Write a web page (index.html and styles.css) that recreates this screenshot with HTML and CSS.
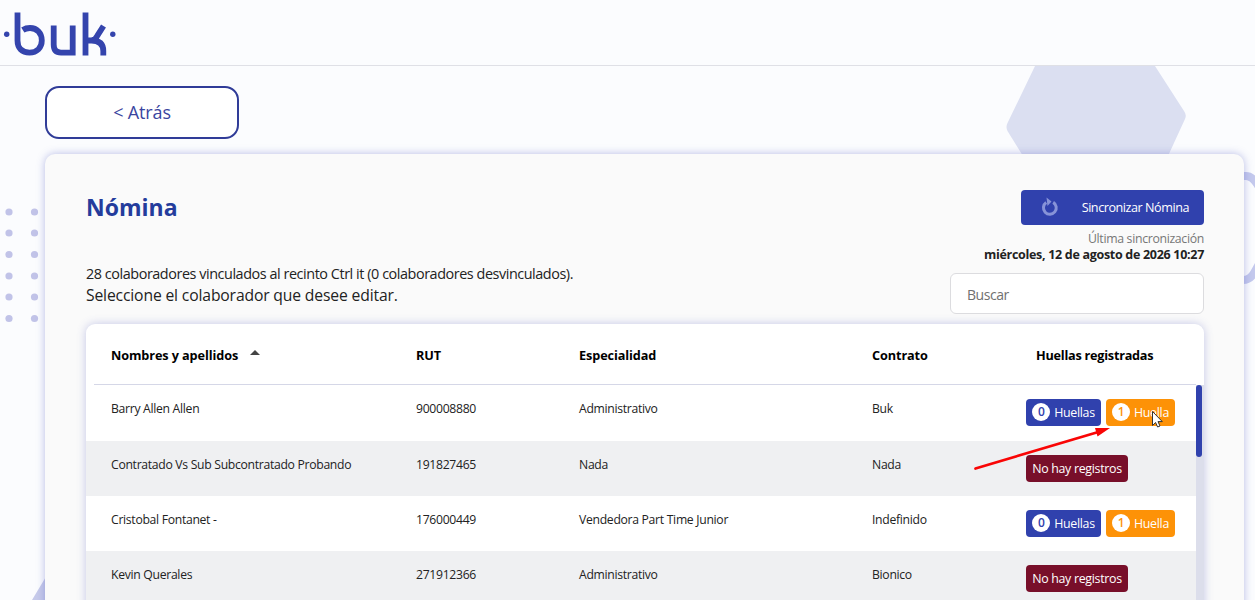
FILE: index.html
```html
<!DOCTYPE html>
<html lang="es">
<head>
<meta charset="utf-8">
<title>Nómina</title>
<link rel="stylesheet" href="styles.css">
</head>
<body>
<div class="page">
  <svg class="backdrop" width="1255" height="600" viewBox="0 0 1255 600">
    <path d="M1035 66H1155L1184 111Q1187 115 1185 119L1168 156H1023L1007.500 131Q1005.500 127 1007.500 123Z" fill="#dbdff1"/>
    <g fill="#c1c3e8">
      <circle cx="9" cy="212" r="3.6"/><circle cx="34.5" cy="212" r="3.6"/>
      <circle cx="9" cy="233" r="3.6"/><circle cx="34.5" cy="233" r="3.6"/>
      <circle cx="9" cy="254.500" r="3.6"/><circle cx="34.5" cy="254.500" r="3.6"/>
      <circle cx="9" cy="276" r="3.6"/><circle cx="34.5" cy="276" r="3.6"/>
      <circle cx="9" cy="297" r="3.6"/><circle cx="34.5" cy="297" r="3.6"/>
      <circle cx="9" cy="318.500" r="3.6"/><circle cx="34.5" cy="318.500" r="3.6"/>
    </g>
    <path d="M32 600L50 570V600Z" fill="#c6caea"/>
    <path d="M1235 176H1246Q1252 176 1257 184L1267 200V250L1254 273Q1250 280 1243 280" fill="none" stroke="#c4c9ed" stroke-width="8"/>
  </svg>
  <header class="topbar">
    <svg class="logo" width="120" height="60" viewBox="0 0 120 60" role="img" aria-label="buk">
      <g fill="none" stroke="#3444ad" stroke-width="5.800">
        <path d="M17.500 12.500V40.500C17.500 48 22 52.600 29.500 52.600C37 52.600 41.800 47.500 41.800 40.500C41.800 33 37 28 30 28C26.800 28 24.800 28.700 22.800 30"/>
        <path d="M53.700 25.500V44.500Q53.700 52.600 61 52.600H72.700V25.500"/>
        <path d="M85.500 12.500V55.500M87 40.500H91.500Q103.300 40.500 103.300 51V55.500M92 40.500Q95.500 39.500 97.500 35.500L103.500 26"/>
      </g>
      <circle cx="6.700" cy="34.300" r="2.700" fill="#3444ad"/><circle cx="112.800" cy="34.300" r="2.700" fill="#3444ad"/>
    </svg>
  </header>
  <main class="main">
    <button class="back"><span>&lt; Atrás</span></button>
    <section class="card">
      <div class="intro">
        <div class="intro-text">
          <h1 class="title">Nómina</h1>
          <p class="summary">28 colaboradores vinculados al recinto Ctrl it (0 colaboradores desvinculados).</p>
          <p class="hint">Seleccione el colaborador que desee editar.</p>
        </div>
        <div class="tools">
          <button class="sync">
            <svg class="sync-icon" width="18" height="20" viewBox="0 0 18 20"><path d="M12.200 5.400A6.400 6.400 0 1 1 5.200 5.600" fill="none" stroke="#8793d8" stroke-width="3"/><path d="M5.500 .5L10.500 4.500L6.500 9Z" fill="#8793d8"/></svg>
            <span>Sincronizar Nómina</span>
          </button>
          <span class="sync-label">Última sincronización</span>
          <strong class="sync-date">miércoles, 12 de agosto de 2026 10:27</strong>
          <input class="search" type="text" placeholder="Buscar">
        </div>
      </div>
      <div class="table">
        <div class="row head">
          <span><span class="h-name">Nombres y apellidos</span><i class="sort"></i></span><span>RUT</span><span>Especialidad</span><span>Contrato</span><span class="h-prints">Huellas registradas</span>
        </div>
        <div class="body">
          <div class="rows">
            <div class="row tall"><span>Barry Allen Allen</span><span>900008880</span><span>Administrativo</span><span>Buk</span>
              <div class="badges"><span class="badge blue"><b>0</b><span>Huellas</span></span><span class="badge orange"><b>1</b><span>Huella</span></span></div></div>
            <div class="row alt"><span>Contratado Vs Sub Subcontratado Probando</span><span>191827465</span><span>Nada</span><span>Nada</span>
              <div class="badges"><span class="badge red">No hay registros</span></div></div>
            <div class="row"><span>Cristobal Fontanet -</span><span>176000449</span><span>Vendedora Part Time Junior</span><span>Indefinido</span>
              <div class="badges"><span class="badge blue"><b>0</b><span>Huellas</span></span><span class="badge orange"><b>1</b><span>Huella</span></span></div></div>
            <div class="row alt"><span>Kevin Querales</span><span>271912366</span><span>Administrativo</span><span>Bionico</span>
              <div class="badges"><span class="badge red">No hay registros</span></div></div>
          </div>
          <div class="track"><div class="thumb"></div></div>
        </div>
      </div>
    </section>
  </main>
  <svg class="pointer" width="210" height="70" viewBox="970 405 210 70">
    <path d="M1152.500 411.500V425.500L1155.600 422.500L1157.600 427L1160 426L1158 421.600H1162.300Z" fill="#fff" stroke="#333" stroke-width="1"/>
    <path d="M975.500 468.500L1100 431.500" stroke="#f90505" stroke-width="2.700" stroke-linecap="round"/>
    <path d="M1110 428L1095 428L1097.500 436.500Z" fill="#f90505"/>
  </svg>
</div>
</body>
</html>
```
FILE: styles.css
```css
* { box-sizing: border-box; }
body { margin: 0; font-family: "Open Sans", "Noto Sans", sans-serif; color: #222; background: #fbfcfe; }
button, input { font: inherit; }
.page { position: relative; width: 1255px; height: 600px; overflow: hidden; }
.backdrop { position: absolute; left: 0; top: 0; }
.topbar { position: relative; height: 66px; border-bottom: 1px solid #dfe0e6; background: #fbfcfe; }
.logo { display: block; }
.main { position: relative; display: flex; flex-direction: column; align-items: flex-start; padding: 20px 11px 0 45px; }
.back { width: 194px; height: 53px; padding: 0 0 1px; border: 2px solid #303c98; border-radius: 14px; background: #fff; color: #3a45a0; font-size: 18px; letter-spacing: -.15px; }
.card { width: 1199px; height: 500px; margin-top: 15px; padding: 36px 40px 0 41px; border-radius: 10px; background: #fafafa; box-shadow: 0 0 9px rgba(75, 85, 190, .38); }
.intro { display: flex; justify-content: space-between; height: 134px; }
.title { margin: 0; font-size: 23px; line-height: 34px; color: #243c9c; }
.summary { margin: 40px 0 0; font-size: 14.400px; line-height: 20px; letter-spacing: -.44px; }
.hint { margin: 0; font-size: 15.700px; line-height: 23px; letter-spacing: -.15px; }
.tools { display: flex; flex-direction: column; align-items: flex-end; }
.sync { display: flex; align-items: center; justify-content: space-between; width: 183px; height: 35px; padding: 0 15px 1px 20px; border: 0; border-radius: 4px; background: #3041ad; color: #fff; font-size: 12.600px; letter-spacing: -.45px; }
.sync-label { margin-top: 5px; font-size: 12.300px; line-height: 17px; letter-spacing: -.33px; color: #777; }
.sync-date { font-size: 12.500px; line-height: 16px; letter-spacing: -.3px; }
.search { width: 254px; height: 41px; margin-top: 10px; padding: 2px 16px 0; border: 1px solid #dcdcdf; border-radius: 6px; background: #fff; font-size: 14px; letter-spacing: -.45px; }
.search::placeholder { color: #707070; opacity: 1; }
.table { height: 330px; overflow: hidden; border-radius: 9px 9px 0 0; background: #fff; box-shadow: 0 0 10px rgba(75, 85, 190, .3); }
.row { display: grid; grid-template-columns: 305px 163px 293px 154px 1fr; height: 55px; padding: 15px 0 0 25px; font-size: 12.200px; line-height: 17px; letter-spacing: -.3px; }
.row.tall { height: 56px; }
.row.alt { background: #eff0f2; }
.head { height: 61px; margin: 0 8px; padding: 22px 0 0 17px; border-bottom: 1px solid #d5d7e7; color: #000; font-weight: 700; font-size: 12.700px; line-height: 19px; letter-spacing: -.1px; }
.head > span:last-child { letter-spacing: -.25px; }
.h-prints { padding-left: 10px; }
.sort { display: inline-block; margin-left: 12px; vertical-align: 5px; border: 5px solid transparent; border-top: 0; border-bottom: 5px solid #444; }
.body { display: flex; background: #fff; }
.rows { width: 1110px; }
.track { width: 8px; height: 270px; background: #dcdeeb; }
.thumb { width: 6px; height: 72px; border-radius: 3px; background: #3041ad; }
.badges { display: flex; gap: 5px; margin-top: -.6px; }
.badge { display: flex; align-items: center; justify-content: center; gap: 4px; height: 27px; padding-bottom: 1px; border-radius: 4px; color: #fff; font-size: 12.400px; white-space: nowrap; }
.badge b { width: 18px; height: 18px; border-radius: 50%; background: #fff; text-align: center; line-height: 18px; font-size: 12px; font-weight: 600; }
.blue { width: 75px; background: #3041ad; }
.blue b { color: #3041ad; }
.orange { width: 69px; background: #fd9207; }
.orange b { color: #fd9207; }
.red { width: 102px; background: #780f2a; }
.pointer { position: absolute; left: 970px; top: 405px; }
```
